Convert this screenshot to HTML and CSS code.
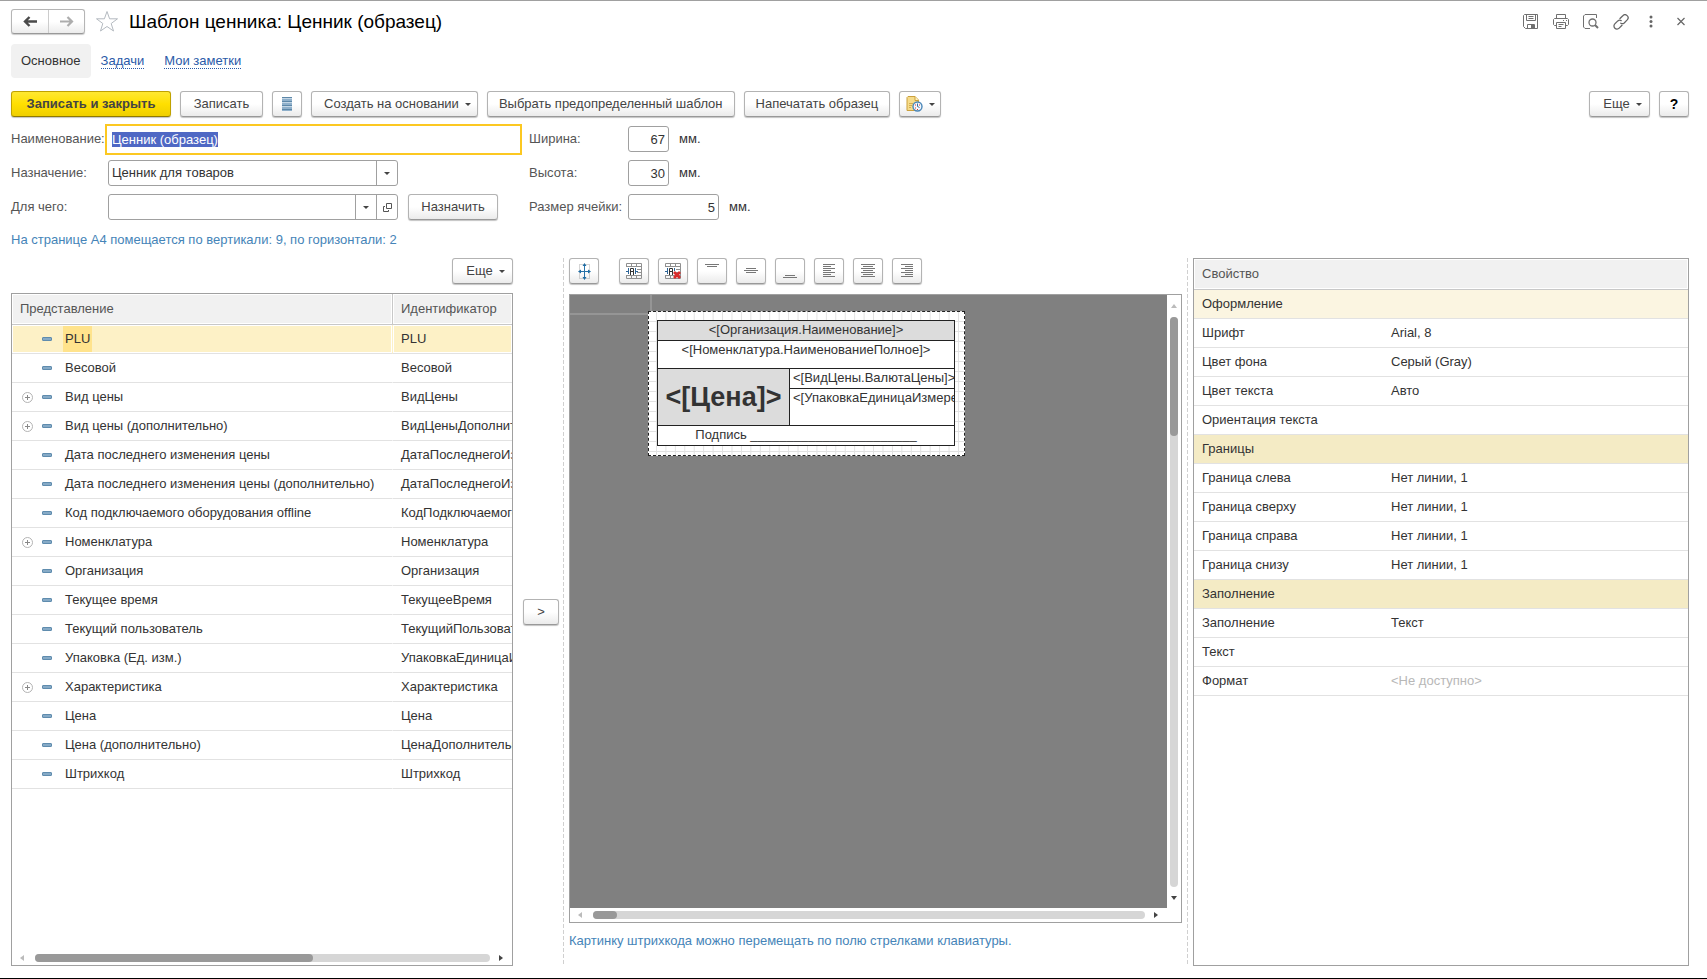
FILE: index.html
```html
<!DOCTYPE html>
<html lang="ru">
<head>
<meta charset="utf-8">
<title>Шаблон ценника: Ценник (образец)</title>
<link rel="stylesheet" href="styles.css">
</head>
<body>
<header class="titlebar">
  <div class="history">
    <button class="history-btn" aria-label="Назад"><svg width="15" height="11" viewBox="0 0 15 11"><path d="M14 5.5H2.5M6.5 1L2 5.500L6.500 10" fill="none" stroke="#4a4a4a" stroke-width="2.400"/></svg></button>
    <button class="history-btn" aria-label="Вперед"><svg width="15" height="11" viewBox="0 0 15 11"><path d="M1 5.5H12.500M8.500 1L13 5.500L8.500 10" fill="none" stroke="#adadad" stroke-width="2.200"/></svg></button>
  </div>
  <button class="plain star" aria-label="В избранное"><svg width="24" height="23" viewBox="0 0 24 23"><path d="M12 1.500L14.600 8.800H22.500L16.200 13.500L18.500 21L12 16.500L5.500 21L7.800 13.500L1.500 8.800H9.400Z" fill="#fff" stroke="#b4bac0"/></svg></button>
  <h1 class="title">Шаблон ценника: Ценник (образец)</h1>
  <div class="window-tools">
    <button class="plain tool" aria-label="Сохранить"><svg width="16" height="16" viewBox="0 0 16 16" fill="none" stroke="#707070"><path d="M1.500 .5H14.500V14.500H2.500L.5 12.500V1.500Z M3.500 .5V6.500H12.500V.5 M5.500 2.500H10.500M5.500 4.500H10.500 M4.500 14.500V10.500H11.500V14.500"/><path d="M8 11H11V14H8Z" fill="#707070" stroke="none"/></svg></button>
    <button class="plain tool" aria-label="Печать"><svg width="16" height="16" viewBox="0 0 16 16" fill="none" stroke="#707070"><path d="M3.500 4.500V.5H12.500V4.500 M3.500 11.500H1.500L.5 10.500V5.500L1.500 4.500H14.500L15.500 5.500V10.500L14.500 11.500H12.500 M3.500 8.500H12.500V14.500H3.500Z M5.500 10.500H10.500M5.500 12.500H8.500 M10 6.500H11M13 6.500H14"/></svg></button>
    <button class="plain tool" aria-label="Предварительный просмотр"><svg width="16" height="16" viewBox="0 0 16 16" fill="none" stroke="#707070"><path d="M7 14.500H2L.5 13V2L2 .5H13.500V4"/><circle cx="9.500" cy="8.500" r="3.500" stroke-width="1.300"/><path d="M12 11L15 14" stroke-width="2"/></svg></button>
    <button class="plain tool" aria-label="Ссылка"><svg width="16" height="16" viewBox="0 0 16 16" fill="none" stroke="#666" stroke-width="1.300" stroke-linecap="round"><path d="M7 4.500L9.800 1.700A2.900 2.900 0 0 1 14.200 5.900L11.200 8.900A2.900 2.900 0 0 1 7.800 9.200"/><path d="M9 11.300L6.200 14.100A2.900 2.900 0 0 1 1.800 9.900L4.800 6.900A2.900 2.900 0 0 1 8.200 6.600"/></svg></button>
    <button class="plain tool" aria-label="Меню"><svg width="16" height="16" viewBox="0 0 16 16" fill="#666"><circle cx="8" cy="3" r="1.500"/><circle cx="8" cy="7.500" r="1.500"/><circle cx="8" cy="12" r="1.500"/></svg></button>
    <button class="plain tool" aria-label="Закрыть"><svg width="16" height="16" viewBox="0 0 16 16"><path d="M4.500 4L11.500 11M11.500 4L4.500 11" stroke="#666" stroke-width="1.200"/></svg></button>
  </div>
</header>

<nav class="tabs">
  <a class="tab tab-current" href="#main">Основное</a>
  <a class="tab" href="#tasks"><span class="tab-text">Задачи</span></a>
  <a class="tab" href="#notes"><span class="tab-text">Мои заметки</span></a>
</nav>

<div class="commands">
  <button class="btn btn-primary">Записать и закрыть</button>
  <button class="btn btn-save">Записать</button>
  <button class="btn btn-icon" aria-label="Структура"><svg width="10" height="14" viewBox="0 0 10 14"><path d="M0 0H10V14H0Z" fill="#8fb0cb"/><path d="M0 .5H10M0 4.500H10M0 8.500H10M0 12.500H10" stroke="#5d87a8"/><path d="M0 1.500H10M0 5.500H10M0 9.500H10" stroke="#c3d6e5"/></svg></button>
  <button class="btn btn-menu">Создать на основании<i class="caret"></i></button>
  <button class="btn btn-wide">Выбрать предопределенный шаблон</button>
  <button class="btn btn-wide">Напечатать образец</button>
  <button class="btn btn-report" aria-label="Отчеты"><svg width="17" height="16" viewBox="0 0 17 16"><path d="M1 1.500L2 .5H9L12.500 4V14.500H1Z" fill="#f6dc8a" stroke="#cba03c"/><path d="M9 .5V4.500H12.500" fill="#fff3c4" stroke="#cba03c"/><path d="M3 7.500H7M3 9.500H6M3 11.500H5" stroke="#d4ad50"/><circle cx="11.500" cy="10.500" r="4.500" fill="#f3f8fd" stroke="#4a86b8" stroke-width="1.400"/><path d="M11.500 7.500V10.500L13.500 11.500" fill="none" stroke="#3c6f9d"/><path d="M9 9H10M13 9H14M9 12H10M11 13.500H12" stroke="#d33"/></svg><i class="caret"></i></button>
  <button class="btn btn-menu btn-more">Еще<i class="caret"></i></button>
  <button class="btn btn-icon btn-help">?</button>
</div>

<form class="form">
  <div class="form-main">
    <div class="field"><label class="label" for="name">Наименование:</label><input class="name-input" id="name" value="Ценник (образец)" autofocus></div>
    <div class="field"><label class="label" for="purpose">Назначение:</label>
      <div class="combo"><select class="combo-value" id="purpose"><option>Ценник для товаров</option></select><span class="combo-btn"><i class="caret"></i></span></div></div>
    <div class="field"><label class="label" for="target">Для чего:</label>
      <div class="combo"><input class="combo-value" id="target"><button type="button" class="combo-btn" aria-label="Выбрать"><i class="caret"></i></button><button type="button" class="combo-btn" aria-label="Открыть"><svg width="9" height="9" viewBox="0 0 9 9" fill="none" stroke="#555"><path d="M3.500 .5H8.500V5.500H3.500Z M2 3.500H.5V8.500H5.500V7"/></svg></button></div>
      <button type="button" class="btn btn-assign">Назначить</button></div>
  </div>
  <div class="form-size">
    <div class="field"><label class="label" for="w">Ширина:</label><input class="num" id="w" value="67"><span class="unit">мм.</span></div>
    <div class="field"><label class="label" for="h">Высота:</label><input class="num" id="h" value="30"><span class="unit">мм.</span></div>
    <div class="field"><label class="label" for="cell">Размер ячейки:</label><input class="num num-wide" id="cell" value="5"><span class="unit">мм.</span></div>
  </div>
</form>
<p class="note page-note">На странице А4 помещается по вертикали: 9, по горизонтали: 2</p>

<main class="work">
  <section class="fields">
    <button class="btn btn-menu btn-more">Еще<i class="caret"></i></button>
    <div class="panel">
      <table class="grid fields-grid">
        <colgroup><col class="col-view"><col></colgroup>
        <thead><tr><th>Представление</th><th>Идентификатор</th></tr></thead>
        <tbody>
          <tr class="selected"><td><div class="node"><i class="exp"></i><i class="dash"></i><span class="name">PLU</span></div></td><td>PLU</td></tr>
          <tr><td><div class="node"><i class="exp"></i><i class="dash"></i><span class="name">Весовой</span></div></td><td>Весовой</td></tr>
          <tr><td><div class="node"><i class="exp plus"></i><i class="dash"></i><span class="name">Вид цены</span></div></td><td>ВидЦены</td></tr>
          <tr><td><div class="node"><i class="exp plus"></i><i class="dash"></i><span class="name">Вид цены (дополнительно)</span></div></td><td>ВидЦеныДополнительно</td></tr>
          <tr><td><div class="node"><i class="exp"></i><i class="dash"></i><span class="name">Дата последнего изменения цены</span></div></td><td>ДатаПоследнегоИзменения</td></tr>
          <tr><td><div class="node"><i class="exp"></i><i class="dash"></i><span class="name">Дата последнего изменения цены (дополнительно)</span></div></td><td>ДатаПоследнегоИзменения</td></tr>
          <tr><td><div class="node"><i class="exp"></i><i class="dash"></i><span class="name">Код подключаемого оборудования offline</span></div></td><td>КодПодключаемогоОборудования</td></tr>
          <tr><td><div class="node"><i class="exp plus"></i><i class="dash"></i><span class="name">Номенклатура</span></div></td><td>Номенклатура</td></tr>
          <tr><td><div class="node"><i class="exp"></i><i class="dash"></i><span class="name">Организация</span></div></td><td>Организация</td></tr>
          <tr><td><div class="node"><i class="exp"></i><i class="dash"></i><span class="name">Текущее время</span></div></td><td>ТекущееВремя</td></tr>
          <tr><td><div class="node"><i class="exp"></i><i class="dash"></i><span class="name">Текущий пользователь</span></div></td><td>ТекущийПользователь</td></tr>
          <tr><td><div class="node"><i class="exp"></i><i class="dash"></i><span class="name">Упаковка (Ед. изм.)</span></div></td><td>УпаковкаЕдиницаИзмерения</td></tr>
          <tr><td><div class="node"><i class="exp plus"></i><i class="dash"></i><span class="name">Характеристика</span></div></td><td>Характеристика</td></tr>
          <tr><td><div class="node"><i class="exp"></i><i class="dash"></i><span class="name">Цена</span></div></td><td>Цена</td></tr>
          <tr><td><div class="node"><i class="exp"></i><i class="dash"></i><span class="name">Цена (дополнительно)</span></div></td><td>ЦенаДополнительно</td></tr>
          <tr><td><div class="node"><i class="exp"></i><i class="dash"></i><span class="name">Штрихкод</span></div></td><td>Штрихкод</td></tr>
        </tbody>
      </table>
      <div class="hscroll hscroll-panel"><i class="arrow arrow-left"></i><div class="track"><div class="thumb thumb-fields"></div></div><i class="arrow arrow-right"></i></div>
    </div>
  </section>

  <div class="mover"><button class="btn btn-move">&gt;</button></div>

  <section class="designer">
    <div class="toolbar">
      <button class="btn btn-icon btn-first" aria-label="Переместить"><svg width="15" height="17" viewBox="0 0 15 17"><path d="M2.500 1.500H12.500V15.500H2.500Z" fill="none" stroke="#aaa" stroke-dasharray="1 1"/><path d="M7.500 2V15M2 8.500H13" stroke="#2a73a8"/><path d="M7.500 0L9.500 3H5.500Z M7.500 17L9.500 14H5.500Z M1 8.500L4 6.500V10.500Z M14 8.500L11 6.500V10.500Z" fill="#1f6da5"/></svg></button>
      <button class="btn btn-icon" aria-label="Объединить"><svg width="16" height="16" viewBox="0 0 16 16"><path d="M.5 .5H15.500V15.500H.5Z M0 3.500H16M0 12.500H16M10.500 0V16M5.500 0V3M5.500 13V16M11 6.500H16M11 9.500H16" fill="none" stroke="#909090"/><path d="M0 4H11V12H0Z" fill="#fff"/><path d="M4.500 12V5.500H7.500V12M4.500 8.500H7.500" fill="none" stroke="#333"/><path d="M2.500 5V11M9.500 5V11M0 8.500H3M9 8.500H12" stroke="#2d6598"/></svg></button>
      <button class="btn btn-icon" aria-label="Разъединить"><svg width="16" height="16" viewBox="0 0 16 16"><path d="M.5 .5H15.500V15.500H.5Z M0 3.500H16M0 12.500H16M10.500 0V16M5.500 0V3M5.500 13V16M11 6.500H16M11 9.500H16" fill="none" stroke="#909090"/><path d="M0 4H11V12H0Z" fill="#fff"/><path d="M4.500 12V5.500H7.500V12M4.500 8.500H7.500" fill="none" stroke="#333"/><path d="M2.500 5V11M9.500 5V8M0 8.500H3" stroke="#2d6598"/><path d="M9 9L15 15M15 9L9 15" stroke="#d92b2b" stroke-width="2.800"/></svg></button>
      <button class="btn btn-icon" aria-label="По верху"><svg width="14" height="16" viewBox="0 0 14 16"><path d="M0 1.500H14M2 3.500H12M0 3.500H0" stroke="#777"/><path d="M0 2H14V3H0Z" fill="#fff"/></svg></button>
      <button class="btn btn-icon" aria-label="По центру по вертикали"><svg width="14" height="16" viewBox="0 0 14 16"><path d="M2 5.500H12M0 7.500H14M2 9.500H12" stroke="#777"/></svg></button>
      <button class="btn btn-icon" aria-label="По низу"><svg width="14" height="16" viewBox="0 0 14 16"><path d="M2 12.500H12M0 14.500H14" stroke="#777"/></svg></button>
      <button class="btn btn-icon" aria-label="По левому краю"><svg width="12" height="14" viewBox="0 0 12 14"><path d="M0 .5H12M0 2.500H8M0 4.500H12M0 6.500H8M0 8.500H12M0 10.500H8M0 12.500H12" stroke="#777"/></svg></button>
      <button class="btn btn-icon" aria-label="По центру"><svg width="14" height="14" viewBox="0 0 14 14"><path d="M0 .5H14M2 2.500H12M0 4.500H14M2 6.500H12M0 8.500H14M2 10.500H12M0 12.500H14" stroke="#777"/></svg></button>
      <button class="btn btn-icon" aria-label="По правому краю"><svg width="12" height="14" viewBox="0 0 12 14"><path d="M0 .5H12M4 2.500H12M0 4.500H12M4 6.500H12M0 8.500H12M4 10.500H12M0 12.500H12" stroke="#777"/></svg></button>
    </div>
    <div class="sheet">
      <div class="canvas">
        <i class="guide guide-v"></i><i class="guide guide-h"></i>
        <div class="tag">
          <table class="tag-table">
            <colgroup><col class="tag-col"><col></colgroup>
            <tr class="r20"><td class="shade" colspan="2">&lt;[Организация.Наименование]&gt;</td></tr>
            <tr class="r28"><td colspan="2">&lt;[Номенклатура.НаименованиеПолное]&gt;</td></tr>
            <tr class="r20"><td class="shade price" rowspan="2">&lt;[Цена]&gt;</td><td class="left">&lt;[ВидЦены.ВалютаЦены]&gt;</td></tr>
            <tr class="r37"><td class="left">&lt;[УпаковкаЕдиницаИзмерения]&gt;</td></tr>
            <tr class="r20"><td colspan="2">Подпись _______________________</td></tr>
          </table>
        </div>
      </div>
      <div class="vscroll"><i class="arrow arrow-up"></i><div class="track"><div class="thumb thumb-v"></div></div><i class="arrow arrow-down"></i></div>
      <div class="hscroll hscroll-sheet"><i class="arrow arrow-left"></i><div class="track"><div class="thumb thumb-sheet"></div></div><i class="arrow arrow-right"></i></div>
    </div>
    <p class="note hint">Картинку штрихкода можно перемещать по полю стрелками клавиатуры.</p>
  </section>

  <div class="splitter"></div>

  <section class="panel">
    <table class="grid props">
      <colgroup><col class="col-prop"><col></colgroup>
      <thead><tr><th colspan="2">Свойство</th></tr></thead>
      <tbody>
        <tr class="current"><td colspan="2">Оформление</td></tr>
        <tr><td>Шрифт</td><td>Arial, 8</td></tr>
        <tr><td>Цвет фона</td><td>Серый (Gray)</td></tr>
        <tr><td>Цвет текста</td><td>Авто</td></tr>
        <tr><td>Ориентация текста</td><td></td></tr>
        <tr class="group"><td colspan="2">Границы</td></tr>
        <tr><td>Граница слева</td><td>Нет линии, 1</td></tr>
        <tr><td>Граница сверху</td><td>Нет линии, 1</td></tr>
        <tr><td>Граница справа</td><td>Нет линии, 1</td></tr>
        <tr><td>Граница снизу</td><td>Нет линии, 1</td></tr>
        <tr class="group"><td colspan="2">Заполнение</td></tr>
        <tr><td>Заполнение</td><td>Текст</td></tr>
        <tr><td>Текст</td><td></td></tr>
        <tr><td>Формат</td><td class="muted">&lt;Не доступно&gt;</td></tr>
      </tbody>
    </table>
  </section>
</main>
<script src="script.js"></script>
</body>
</html>
```
FILE: styles.css
```css
* { box-sizing: border-box; }

body {
  margin: 0;
  min-height: 100vh;
  display: flex;
  flex-direction: column;
  padding: 8px 18px 12px 11px;
  border-top: 1px solid #a0a0a0;
  border-bottom: 1px solid #000;
  background: #fff;
  color: #333;
  font: 13px/16px "Liberation Sans", Arial, sans-serif;
}

button, input, select { font: inherit; color: inherit; margin: 0; }
button { cursor: pointer; }
svg { display: block; flex: none; }

.plain { border: 0; padding: 0; background: none; }

/* Title bar */
.titlebar { display: flex; align-items: center; height: 25px; }
.history {
  display: flex;
  height: 25px;
  border: 1px solid #b5b5b5;
  border-bottom-color: #999;
  border-radius: 3px;
  background: linear-gradient(#fff 50%, #ececec);
  box-shadow: 0 1px 1px #ccc;
}
.history-btn {
  width: 36px;
  padding: 0;
  display: flex;
  align-items: center;
  justify-content: center;
  border: 0;
  background: none;
}
.history-btn + .history-btn { border-left: 1px solid #ccc; }
.star { margin-left: 10px; }
.title { margin: 0 0 0 10px; font-size: 19px; line-height: 24px; font-weight: 400; color: #000; }
.window-tools { display: flex; gap: 14px; margin-left: auto; }

/* Tabs */
.tabs { display: flex; align-items: center; margin-top: 10px; }
.tab {
  padding: 9px 10px;
  border-radius: 4px;
  color: #2a5aa8;
  text-decoration: none;
}
.tab-current { background: #f1f1f1; color: #333; }
.tab-text { border-bottom: 1px dotted #2a5aa8; }

/* Buttons */
.btn {
  height: 26px;
  flex: none;
  padding: 0 14px;
  display: flex;
  align-items: center;
  justify-content: center;
  border: 1px solid #b3b3b3;
  border-bottom-color: #999;
  border-radius: 3px;
  background: linear-gradient(#fff 50%, #ebebeb);
  box-shadow: 0 1px 1px #c4c4c4;
  color: #444;
  white-space: nowrap;
}
.btn-primary {
  width: 160px;
  border-color: #c0a200;
  border-bottom-color: #8f7a00;
  background: linear-gradient(#ffe832, #ffdf00 50%, #efcf00);
  font-weight: 700;
}
.btn-save { width: 83px; }
.btn-icon { width: 30px; padding: 0; }
.btn-menu { padding: 0 6px 0 12px; gap: 6px; }
.btn-wide { padding: 0 11px; }
.btn-report { width: 42px; padding: 0; gap: 6px; }
.btn-more { width: 61px; margin-left: auto; }
.btn-help { color: #000; font-size: 14px; font-weight: 700; }
.btn-assign { width: 90px; margin-left: 10px; }
.btn-move { width: 36px; }
.commands { display: flex; gap: 9px; margin-top: 13px; }
.caret {
  width: 0;
  border: 3px solid transparent;
  border-top-color: #444;
  border-bottom-width: 0;
}

/* Form */
.form { display: flex; gap: 7px; margin-top: 5px; }
.form-main { width: 511px; }
.field { display: flex; align-items: center; height: 34px; }
.label { width: 97px; flex: none; color: #555; white-space: nowrap; }
.name-input {
  flex: 1;
  min-width: 0;
  height: 31px;
  margin-left: -3px;
  padding: 0 5px;
  border: 2px solid #fcc821;
  outline: 0;
  background: #fff;
}
.name-input::selection { background: #4f68c4; color: #fff; }
.combo {
  display: flex;
  width: 290px;
  height: 26px;
  border: 1px solid #a0a0a0;
  border-radius: 3px;
  background: #fff;
}
.combo-value {
  flex: 1;
  min-width: 0;
  padding: 0 3px;
  appearance: none;
  border: 0;
  outline: 0;
  background: none;
}
.combo-btn {
  width: 21px;
  padding: 0;
  display: flex;
  align-items: center;
  justify-content: center;
  border: 0;
  border-left: 1px solid #a0a0a0;
  background: none;
}
.form-size .label { width: 99px; }
.num {
  width: 41px;
  height: 26px;
  padding: 0 3px;
  border: 1px solid #a0a0a0;
  border-radius: 3px;
  text-align: right;
}
.num-wide { width: 91px; }
.unit { margin-left: 10px; }

.note { margin: 0; color: #4584b8; }
.page-note { padding: 8px 0 10px; }

/* Working area */
.work {
  flex: 1;
  display: grid;
  grid-template-columns: 502fr 50px 619fr 11px 496fr;
}
.fields { min-width: 0; display: flex; flex-direction: column; gap: 9px; }
.panel {
  flex: 1;
  min-width: 0;
  display: flex;
  flex-direction: column;
  overflow: hidden;
  border: 1px solid #a0a0a0;
}
.grid { width: 100%; table-layout: fixed; border-collapse: separate; border-spacing: 0; }
.grid th, .grid td {
  height: 29px;
  padding: 0 8px;
  overflow: hidden;
  border-bottom: 1px solid #e2e2e2;
  text-align: left;
  white-space: nowrap;
}
.grid th {
  height: 31px;
  border-bottom-color: #c8c8c8;
  background: #f1f1f1;
  box-shadow: inset 0 0 0 1px #fff;
  color: #555;
  font-weight: 400;
}
.fields-grid th + th { border-left: 1px solid #c8c8c8; }
.fields-grid td + td { border-left: 1px solid transparent; }
.fields-grid td:first-child { padding: 0 0 0 10px; }
.col-view { width: 380px; }
.col-prop { width: 189px; }
.selected td { background: #fdf1c6; box-shadow: inset 0 0 0 1px #fff; }
.selected .name { background: #ffe38c; }
.node { display: flex; align-items: center; }
.exp { width: 11px; height: 11px; margin-right: 9px; flex: none; }
.plus {
  border: 1px solid #b4b4b4;
  border-radius: 50%;
  background:
    linear-gradient(#888, #888) 2px 4px / 5px 1px no-repeat,
    linear-gradient(#888, #888) 4px 2px / 1px 5px no-repeat;
}
.dash {
  width: 10px;
  height: 4px;
  margin-right: 11px;
  flex: none;
  border: 1px solid #5f8cae;
  border-radius: 1px;
  background: #86aac6;
}
.name { padding: 0 2px; line-height: 26px; }
.current td { background: #fbf5e1; }
.group td { background: #f4ebc5; }
.muted { color: #b8b8b8; }

.mover { display: flex; align-items: center; padding-left: 10px; }

/* Scroll bars */
.hscroll { display: flex; align-items: center; gap: 9px; }
.hscroll-panel { margin-top: auto; padding: 0 8px 3px; }
.hscroll-sheet { grid-column: 1 / 3; padding: 0 22px 0 8px; }
.track { flex: 1; border-radius: 4px; background: #d6d6d6; }
.thumb { border-radius: 4px; background: #999; }
.hscroll .thumb { height: 8px; }
.thumb-fields { width: 61%; }
.thumb-sheet { width: 24px; }
.vscroll { display: flex; flex-direction: column; align-items: center; gap: 9px; padding: 9px 0 8px; }
.vscroll .track { width: 8px; }
.thumb-v { height: 119px; }
.arrow { width: 0; height: 0; flex: none; border: 3px solid transparent; }
.arrow-left { border-left: 0; border-right: 4px solid #bbb; margin-right: 2px; }
.arrow-right { border-right: 0; border-left: 4px solid #444; margin-right: 1px; }
.arrow-up { border-top: 0; border-bottom: 4px solid #bbb; }
.arrow-down { border-bottom: 0; border-top: 4px solid #444; }

/* Designer */
.designer, .splitter {
  background: repeating-linear-gradient(#d0d0d0 0 4px, transparent 4px 6px) 0 0 / 1px 100% no-repeat;
}
.splitter { background-position: 5px 0; }
.designer { min-width: 0; display: flex; flex-direction: column; padding-left: 6px; }
.toolbar { display: flex; gap: 9px; }
.btn-first { margin-right: 11px; }
.sheet {
  flex: 1;
  display: grid;
  grid-template: 1fr 14px / 1fr 14px;
  margin-top: 10px;
  border: 1px solid #a0a0a0;
}
.canvas { position: relative; overflow: hidden; background: #808080; }
.guide { position: absolute; background: #959595; }
.guide-v { left: 80px; top: 0; width: 2px; height: 17px; }
.guide-h { left: 0; top: 18px; width: 78px; height: 2px; }
.tag {
  position: absolute;
  left: 78px;
  top: 16px;
  padding: 8px 9px 9px 8px;
  border: 1px dashed #222;
  background:
    linear-gradient(90deg, #e2e2e2 1px, transparent 1px) 7px 0 / 3% 100%,
    linear-gradient(#e2e2e2 1px, #fff 1px) 0 9px / 100% 7%;
}
.tag-table {
  width: 298px;
  table-layout: fixed;
  border-collapse: collapse;
  background: #fff;
}
.tag-col { width: 132px; }
.tag-table td {
  padding: 1px 3px;
  overflow: hidden;
  border: 1px solid #222;
  text-align: center;
  vertical-align: top;
  white-space: nowrap;
}
.tag-table .left { text-align: left; }
.tag-table .shade { background: #dcdcdc; }
.tag-table .price { padding: 0; font-size: 27px; line-height: 32px; font-weight: 700; vertical-align: middle; }
.r20 { height: 20px; }
.r28 { height: 28px; }
.r37 { height: 37px; }
.hint { padding: 10px 0 17px; }
```
FILE: script.js
```js
const nameInput = document.getElementById('name');
nameInput.focus();
nameInput.select();
```
